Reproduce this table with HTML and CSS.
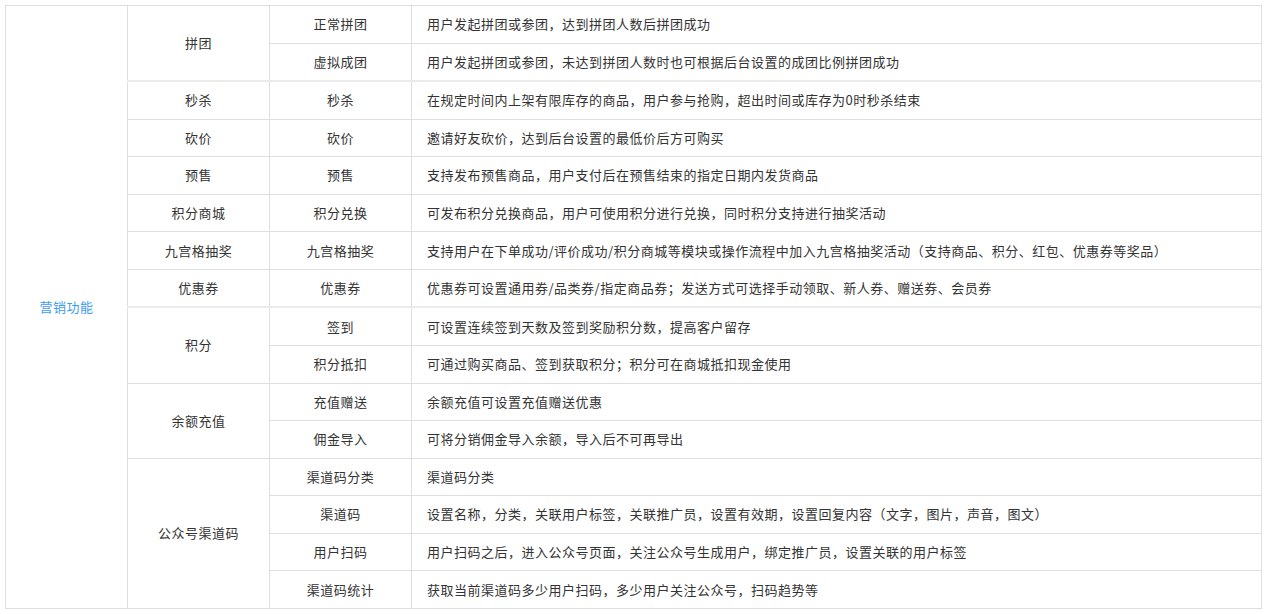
FILE: index.html
```html
<!DOCTYPE html>
<html lang="zh">
<head>
<meta charset="utf-8">
<link rel="stylesheet" href="styles.css">
</head>
<body>
<table class="feat">
<colgroup><col class="c1"><col class="c2"><col class="c3"><col class="c4"></colgroup>
<tbody>
<tr>
<td class="cat" rowspan="16">营销功能</td>
<td class="mid" rowspan="2">拼团</td>
<td class="mid">正常拼团</td>
<td class="desc">用户发起拼团或参团，达到拼团人数后拼团成功</td>
</tr>
<tr><td class="mid">虚拟成团</td><td class="desc">用户发起拼团或参团，未达到拼团人数时也可根据后台设置的成团比例拼团成功</td></tr>
<tr class="grp"><td class="mid">秒杀</td><td class="mid">秒杀</td><td class="desc">在规定时间内上架有限库存的商品，用户参与抢购，超出时间或库存为0时秒杀结束</td></tr>
<tr><td class="mid">砍价</td><td class="mid">砍价</td><td class="desc">邀请好友砍价，达到后台设置的最低价后方可购买</td></tr>
<tr><td class="mid">预售</td><td class="mid">预售</td><td class="desc">支持发布预售商品，用户支付后在预售结束的指定日期内发货商品</td></tr>
<tr><td class="mid">积分商城</td><td class="mid">积分兑换</td><td class="desc">可发布积分兑换商品，用户可使用积分进行兑换，同时积分支持进行抽奖活动</td></tr>
<tr><td class="mid">九宫格抽奖</td><td class="mid">九宫格抽奖</td><td class="desc">支持用户在下单成功/评价成功/积分商城等模块或操作流程中加入九宫格抽奖活动（支持商品、积分、红包、优惠券等奖品）</td></tr>
<tr><td class="mid">优惠券</td><td class="mid">优惠券</td><td class="desc">优惠券可设置通用券/品类券/指定商品券；发送方式可选择手动领取、新人券、赠送券、会员券</td></tr>
<tr class="grp"><td class="mid" rowspan="2">积分</td><td class="mid">签到</td><td class="desc">可设置连续签到天数及签到奖励积分数，提高客户留存</td></tr>
<tr><td class="mid">积分抵扣</td><td class="desc">可通过购买商品、签到获取积分；积分可在商城抵扣现金使用</td></tr>
<tr><td class="mid" rowspan="2">余额充值</td><td class="mid">充值赠送</td><td class="desc">余额充值可设置充值赠送优惠</td></tr>
<tr><td class="mid">佣金导入</td><td class="desc">可将分销佣金导入余额，导入后不可再导出</td></tr>
<tr><td class="mid" rowspan="4">公众号渠道码</td><td class="mid">渠道码分类</td><td class="desc">渠道码分类</td></tr>
<tr><td class="mid">渠道码</td><td class="desc">设置名称，分类，关联用户标签，关联推广员，设置有效期，设置回复内容（文字，图片，声音，图文）</td></tr>
<tr><td class="mid">用户扫码</td><td class="desc">用户扫码之后，进入公众号页面，关注公众号生成用户，绑定推广员，设置关联的用户标签</td></tr>
<tr><td class="mid">渠道码统计</td><td class="desc">获取当前渠道码多少用户扫码，多少用户关注公众号，扫码趋势等</td></tr>
</tbody>
</table>
</body>
</html>
```
FILE: styles.css
```css
html, body {
  margin: 0;
  background: #fff;
}
body {
  padding: 5px;
  font-family: "Noto Sans CJK SC", "Noto Sans", sans-serif;
  font-size: 13px;
  color: #333;
}
.feat {
  border-collapse: collapse;
  width: 1257px;
  height: 604px;
  table-layout: fixed;
}
.c1 { width: 122px; }
.c2 { width: 142px; }
.c3 { width: 142px; }
.c4 { width: auto; }
.feat td {
  border: 1px solid #dedede;
  padding: 0 15px;
  height: 36px;
  line-height: 18px;
  letter-spacing: 0.5px;
  vertical-align: middle;
}
.feat .grp td {
  border-top: 2px solid #ebebeb;
}
.cat {
  text-align: center;
  color: #3d9cf5;
}
.mid {
  text-align: center;
}
.desc {
  text-align: left;
}
```
